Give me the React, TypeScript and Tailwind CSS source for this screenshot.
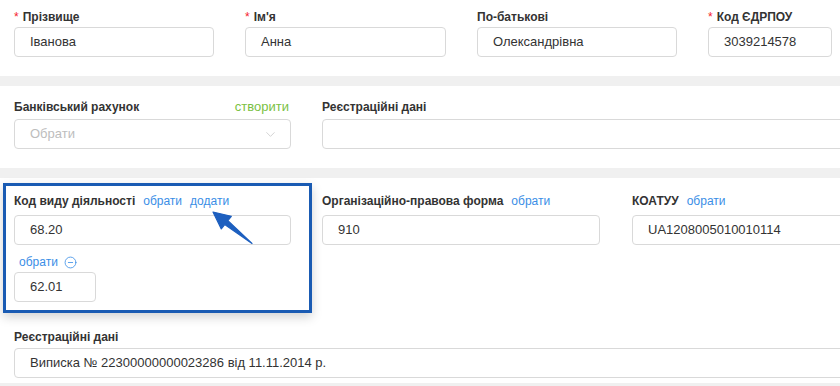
import { ChevronDown, CircleMinus } from "lucide-react";

const Label = ({ text, required }: { text: string; required?: boolean }) => (
  <div className="h-[14px] leading-[14px] text-[12px] font-bold text-[#333] whitespace-nowrap">
    {required && <span className="text-[#f5222d] font-normal mr-[4px]">*</span>}
    {text}
  </div>
);

const Input = ({ value, className = "" }: { value?: string; className?: string }) => (
  <div
    className={`h-[30px] border border-[#d9d9d9] rounded-[4px] bg-white pl-[15px] flex items-center text-[13px] text-[#333] whitespace-nowrap ${className}`}
  >
    {value}
  </div>
);

const Link = ({ text }: { text: string }) => (
  <span className="text-[12px] leading-[14px] font-normal text-[#3a8ee6] ml-[8px]">{text}</span>
);

const App = () => {
  return (
    <div className="w-[840px] h-[386px] overflow-hidden bg-[#f0f0f0] font-['Liberation_Sans',Arial,sans-serif]">
      {/* ПІБ та ЄДРПОУ */}
      <div className="h-[76px] bg-white px-[14px] pt-[10px] flex gap-[31px]">
        <div className="w-[200px] shrink-0">
          <Label text="Прізвище" required />
          <Input value="Іванова" className="mt-[3px]" />
        </div>
        <div className="w-[201px] shrink-0">
          <Label text="Ім'я" required />
          <Input value="Анна" className="mt-[3px]" />
        </div>
        <div className="w-[200px] shrink-0">
          <Label text="По-батькові" />
          <Input value="Олександрівна" className="mt-[3px]" />
        </div>
        <div className="w-[124px] shrink-0">
          <Label text="Код ЄДРПОУ" required />
          <Input value="3039214578" className="mt-[3px]" />
        </div>
      </div>

      {/* Рахунок */}
      <div className="mt-[10px] h-[82px] bg-white px-[14px] pt-[14px] flex gap-[31px]">
        <div className="w-[277px] shrink-0">
          <div className="flex justify-between items-center h-[14px]">
            <Label text="Банківський рахунок" />
            <span className="text-[13px] leading-[14px] text-[#7ac143] mr-[2px]">створити</span>
          </div>
          <div className="mt-[5px] h-[30px] border border-[#d9d9d9] rounded-[4px] pl-[15px] pr-[12px] flex items-center justify-between text-[13px] text-[#bdbdbd]">
            <span>Обрати</span>
            <ChevronDown className="w-[15px] h-[15px] text-[#c4c4c4]" strokeWidth={1.2} />
          </div>
        </div>
        <div className="w-[588px] shrink-0">
          <Label text="Реєстраційні дані" />
          <Input className="mt-[5px]" />
        </div>
      </div>

      {/* КВЕД та інше */}
      <div className="relative mt-[10px] h-[205px] bg-white pl-[3px] pt-[5px]">
        <div className="flex items-start">
          <div className="w-[309px] shrink-0 border-[3px] border-[#1a5bb3] pl-[8px] pr-[18px] pt-[8px] pb-[8px] shadow-[0_4px_10px_rgba(0,0,0,0.18)] bg-white">
            <div className="flex items-center h-[14px]">
              <Label text="Код виду діяльності" />
              <Link text="обрати" />
              <Link text="додати" />
            </div>
            <Input value="68.20" className="mt-[7px]" />
            <div className="mt-[10px] h-[14px] flex items-center gap-[6px] pl-[5px]">
              <span className="text-[12px] leading-[14px] text-[#3a8ee6]">обрати</span>
              <CircleMinus className="w-[13px] h-[13px] text-[#3a8ee6]" strokeWidth={1.5} />
            </div>
            <Input value="62.01" className="mt-[3px] w-[82px]" />
          </div>

          <div className="w-[278px] shrink-0 ml-[10px] pt-[11px]">
            <div className="flex items-center h-[14px]">
              <Label text="Організаційно-правова форма" />
              <Link text="обрати" />
            </div>
            <Input value="910" className="mt-[7px]" />
          </div>

          <div className="w-[278px] shrink-0 ml-[32px] pt-[11px]">
            <div className="flex items-center h-[14px]">
              <Label text="КОАТУУ" />
              <Link text="обрати" />
            </div>
            <Input value="UA1208005010010114" className="mt-[7px]" />
          </div>
        </div>

        <div className="pl-[11px] mt-[17px]">
          <Label text="Реєстраційні дані" />
          <Input value="Виписка № 22300000000023286 від 11.11.2014 р." className="mt-[4px] w-[900px]" />
        </div>

        {/* стрілка-підказка */}
        <svg className="absolute left-[205px] top-[27px]" width="55" height="45" viewBox="0 0 55 45">
          <polygon
            points="8,7 16.3,23.9 19.7,19.6 47,38.5 22.9,15.6 26.3,11.3"
            fill="#1d5fbf"
            stroke="#1d5fbf"
            strokeWidth="1.2"
            strokeLinejoin="round"
          />
        </svg>
      </div>
    </div>
  );
};

export default App;
